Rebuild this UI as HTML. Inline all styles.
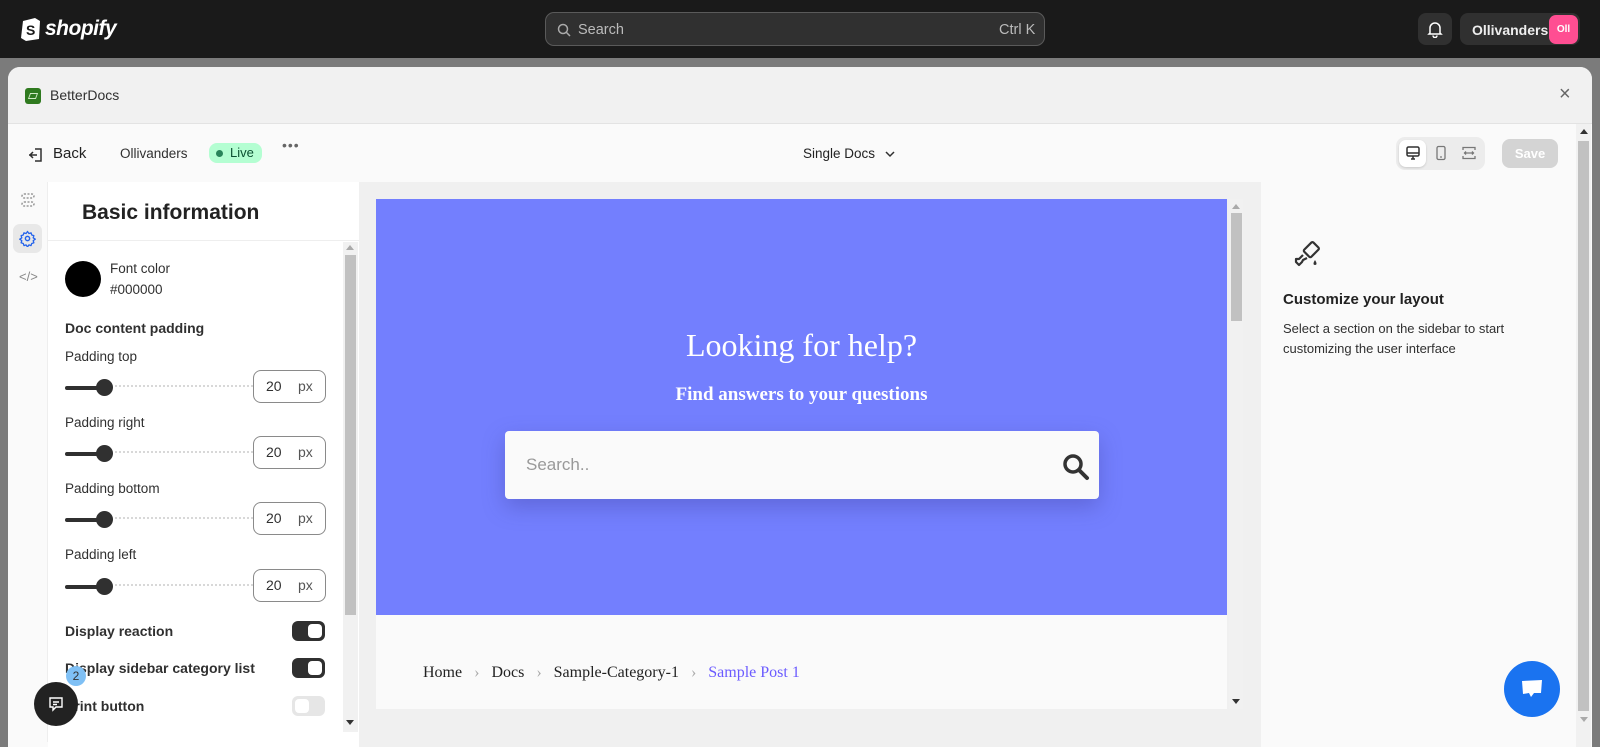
<!DOCTYPE html>
<html><head><meta charset="utf-8"><style>
*{box-sizing:border-box;margin:0;padding:0}
body{width:1600px;height:732px;overflow:hidden;background:#7b7b7b;font-family:"Liberation Sans",sans-serif;position:relative;color:#303030}
.a{position:absolute}
.top{left:0;top:0;width:1600px;height:58px;background:#1a1a1a}
.modal{left:8px;top:67px;width:1584px;height:680px;background:#fafafa;border-radius:12px 12px 0 0;overflow:hidden}
.lbl{font-size:13.5px;color:#303030}
.slider{height:4px;background:#303030;border-radius:2px}
.track{height:4px;border-top:2px dotted #d8d8d8}
.knob{width:17px;height:17px;border-radius:50%;background:#303030}
.inp{width:73px;height:33px;border:1px solid #8a8a8a;border-radius:8px;font-size:14px;line-height:31px}
.tog{width:33px;height:20px;border-radius:6px;background:#303030}
.tog i{position:absolute;right:3px;top:3px;width:14px;height:14px;border-radius:4px;background:#fff}
.b{font-weight:bold;font-size:14px;color:#303030}
</style></head><body>
<div class="a top"></div>
<svg class="a" style="left:20px;top:15px" width="22" height="26" viewBox="0 0 22 26"><path d="M3 6 L15 3 L20 6 L19 24 L6 26 L1 23 Z" fill="#fff"/><text x="6" y="20" font-size="14" font-weight="bold" fill="#1a1a1a" font-family="Liberation Sans">S</text></svg>
<div class="a" style="left:45px;top:17px;color:#fff;font-size:21px;font-weight:bold;font-style:italic;letter-spacing:-0.5px">shopify</div>
<div class="a" style="left:545px;top:12px;width:500px;height:34px;background:#303030;border:1px solid #5a5a5a;border-radius:9px"></div>
<svg class="a" style="left:557px;top:23px" width="14" height="14" viewBox="0 0 14 14"><circle cx="6" cy="6" r="4.5" stroke="#aaa" stroke-width="1.5" fill="none"/><path d="M9.5 9.5 L13 13" stroke="#aaa" stroke-width="1.5"/></svg>
<div class="a" style="left:578px;top:22px;color:#bbb;font-size:14.5px">Search</div>
<div class="a" style="left:999px;top:22px;color:#bbb;font-size:14.5px">Ctrl K</div>
<div class="a" style="left:1418px;top:13px;width:34px;height:32px;background:#303030;border-radius:8px"></div>
<svg class="a" style="left:1426px;top:20px" width="18" height="18" viewBox="0 0 18 18"><path d="M4 13 V8 a5 5 0 0 1 10 0 V13 L15 14 H3 Z M7 15.5 a2 2 0 0 0 4 0" stroke="#fff" stroke-width="1.5" fill="none"/></svg>
<div class="a" style="left:1460px;top:13px;width:120px;height:32px;background:#303030;border-radius:8px"></div>
<div class="a" style="left:1472px;top:22px;color:#eee;font-size:14px;font-weight:bold">Ollivanders</div>
<div class="a" style="left:1549px;top:15px;width:29px;height:29px;background:#ff4e92;border-radius:7px;color:#fff;font-size:10px;font-weight:bold;text-align:center;line-height:29px">Oll</div>

<div class="a modal">
 <div class="a" style="left:0;top:0;width:1584px;height:57px;background:#f1f1f1;border-bottom:1px solid #e3e3e3"></div>
 <div class="a" style="left:17px;top:21px;width:16px;height:16px;background:#2f7a1f;border-radius:3px"></div>
 <div class="a" style="left:21px;top:26px;width:8px;height:6px;border:1.5px solid #cfe8c4;transform:skewX(-20deg)"></div>
 <div class="a" style="left:42px;top:20px;font-size:14px;color:#303030">BetterDocs</div>
 <div class="a" style="left:1551px;top:16px;font-size:20px;color:#666">×</div>
 <svg class="a" style="left:20px;top:80px" width="16" height="16" viewBox="0 0 16 16"><path d="M7 2 H13 V14 H7 M1 8 H9 M5 5 L2 8 L5 11" stroke="#303030" stroke-width="1.5" fill="none"/></svg>
 <div class="a" style="left:45px;top:78px;font-size:15px;color:#222">Back</div>
 <div class="a" style="left:112px;top:79px;font-size:13.5px;color:#303030">Ollivanders</div>
 <div class="a" style="left:201px;top:76px;width:53px;height:20px;background:#b4fed2;border-radius:8px;font-size:13px;line-height:20px;color:#0c5132;padding-left:21px">Live</div>
 <div class="a" style="left:208px;top:83px;width:7px;height:7px;border-radius:50%;background:#29845a"></div>
 <div class="a" style="left:274px;top:70px;font-size:14px;color:#666;letter-spacing:1px">•••</div>
 <div class="a" style="left:795px;top:79px;font-size:13.5px;color:#222">Single Docs</div>
 <svg class="a" style="left:876px;top:82px" width="12" height="10" viewBox="0 0 12 10"><path d="M2 3 L6 7 L10 3" stroke="#303030" stroke-width="1.5" fill="none"/></svg>
 <div class="a" style="left:1388px;top:70px;width:89px;height:33px;background:#ececec;border-radius:9px"></div>
 <div class="a" style="left:1391px;top:73px;width:27px;height:27px;background:#fff;border-radius:7px;box-shadow:0 1px 2px rgba(0,0,0,.15)"></div>
 <svg class="a" style="left:1397px;top:78px" width="16" height="16" viewBox="0 0 16 16"><rect x="2" y="2" width="12" height="9" rx="1.5" stroke="#303030" stroke-width="1.5" fill="none"/><path d="M2 8 H14 M6 14 H10 M8 11 V14" stroke="#303030" stroke-width="1.5"/></svg>
 <svg class="a" style="left:1425px;top:78px" width="16" height="16" viewBox="0 0 16 16"><rect x="4" y="1.5" width="8" height="13" rx="1.5" stroke="#777" stroke-width="1.3" fill="none"/><path d="M7 12 H9" stroke="#777" stroke-width="1.2"/></svg>
 <svg class="a" style="left:1453px;top:78px" width="16" height="16" viewBox="0 0 16 16"><path d="M2 5 V2.5 H14 V5 M2 11 V13.5 H14 V11 M4 8 H12 M5 6.5 L3.5 8 L5 9.5 M11 6.5 L12.5 8 L11 9.5" stroke="#777" stroke-width="1.3" fill="none"/></svg>
 <div class="a" style="left:1494px;top:72px;width:56px;height:29px;background:#d4d4d4;border-radius:8px;color:#fff;font-size:13px;font-weight:bold;text-align:center;line-height:29px">Save</div>
 <div class="a" style="left:1568px;top:57px;width:15px;height:623px;background:#f1f1f1"></div>
 <div class="a" style="left:1570px;top:74px;width:11px;height:570px;background:#c1c1c1"></div>
 <div class="a" style="left:1572px;top:62px;border:4px solid transparent;border-bottom:5px solid #333;border-top:0"></div>
 <div class="a" style="left:1572px;top:650px;border:4px solid transparent;border-top:5px solid #aaa;border-bottom:0"></div>

 <div class="a" style="left:0;top:115px;width:40px;height:560px;border-right:1px solid #eee"></div>
 <svg class="a" style="left:12px;top:125px" width="16" height="16" viewBox="0 0 16 16"><rect x="2" y="2" width="12" height="4" rx="2" stroke="#888" stroke-width="1.3" fill="none" stroke-dasharray="2 1.5"/><rect x="2" y="10" width="12" height="4" rx="2" stroke="#888" stroke-width="1.3" fill="none" stroke-dasharray="2 1.5"/></svg>
 <div class="a" style="left:5px;top:157px;width:29px;height:29px;background:#e8e8e8;border-radius:7px"></div>
 <svg class="a" style="left:11px;top:163px" width="17" height="17" viewBox="0 0 24 24"><circle cx="12" cy="12" r="3" stroke="#2463eb" stroke-width="2" fill="none"/><path d="M12 2 l2 3 3-1 1 3 3 1-1 3 3 2-3 2 1 3-3 1-1 3-3-1-2 3-2-3-3 1-1-3-3-1 1-3-3-2 3-2-1-3 3-1 1-3 3 1z" stroke="#2463eb" stroke-width="1.8" fill="none" stroke-linejoin="round"/></svg>
 <div class="a" style="left:11px;top:202px;font-size:13px;color:#888">&lt;/&gt;</div>

 <div class="a" style="left:40px;top:115px;width:311px;height:565px;background:#fff"></div>
 <div class="a" style="left:74px;top:134px;font-size:21px;font-weight:bold;color:#222">Basic information</div>
 <div class="a" style="left:40px;top:173px;width:311px;border-top:1px solid #eee"></div>
 <div class="a" style="left:335px;top:175px;width:15px;height:490px;background:#f1f1f1"></div>
 <div class="a" style="left:337px;top:188px;width:11px;height:360px;background:#c1c1c1"></div>
 <div class="a" style="left:338px;top:178px;border:4px solid transparent;border-bottom:5px solid #aaa;border-top:0"></div>
 <div class="a" style="left:338px;top:653px;border:4px solid transparent;border-top:5px solid #333;border-bottom:0"></div>
 <div class="a" style="left:57px;top:194px;width:36px;height:36px;border-radius:50%;background:#000"></div>
 <div class="a lbl" style="left:102px;top:194px">Font color</div>
 <div class="a lbl" style="left:102px;top:215px">#000000</div>
 <div class="a b" style="left:57px;top:253px">Doc content padding</div>

 <div class="a lbl" style="left:57px;top:282px">Padding top</div>
 <div class="a slider" style="left:57px;top:319px;width:40px"></div><div class="a track" style="left:100px;top:318px;width:145px"></div><div class="a knob" style="left:88px;top:312px"></div>
 <div class="a inp" style="left:245px;top:303px"><span style="position:absolute;left:12px">20</span><span style="position:absolute;left:44px;color:#555">px</span></div>

 <div class="a lbl" style="left:57px;top:348px">Padding right</div>
 <div class="a slider" style="left:57px;top:385px;width:40px"></div><div class="a track" style="left:100px;top:384px;width:145px"></div><div class="a knob" style="left:88px;top:378px"></div>
 <div class="a inp" style="left:245px;top:369px"><span style="position:absolute;left:12px">20</span><span style="position:absolute;left:44px;color:#555">px</span></div>

 <div class="a lbl" style="left:57px;top:414px">Padding bottom</div>
 <div class="a slider" style="left:57px;top:451px;width:40px"></div><div class="a track" style="left:100px;top:450px;width:145px"></div><div class="a knob" style="left:88px;top:444px"></div>
 <div class="a inp" style="left:245px;top:435px"><span style="position:absolute;left:12px">20</span><span style="position:absolute;left:44px;color:#555">px</span></div>

 <div class="a lbl" style="left:57px;top:480px">Padding left</div>
 <div class="a slider" style="left:57px;top:518px;width:40px"></div><div class="a track" style="left:100px;top:517px;width:145px"></div><div class="a knob" style="left:88px;top:511px"></div>
 <div class="a inp" style="left:245px;top:502px"><span style="position:absolute;left:12px">20</span><span style="position:absolute;left:44px;color:#555">px</span></div>

 <div class="a b" style="left:57px;top:556px">Display reaction</div>
 <div class="a tog" style="left:284px;top:554px"><i></i></div>
 <div class="a b" style="left:57px;top:593px">Display sidebar category list</div>
 <div class="a tog" style="left:284px;top:591px"><i></i></div>
 <div class="a b" style="left:57px;top:631px">Print button</div>
 <div class="a tog" style="left:284px;top:629px;background:#e6e6e6"><i style="left:3px;right:auto"></i></div>

 <div class="a" style="left:351px;top:115px;width:902px;height:565px;background:#f0f0f0"></div>
 <div class="a" style="left:368px;top:132px;width:851px;height:510px;background:#fafafa"></div>
 <div class="a" style="left:368px;top:132px;width:851px;height:416px;background:#737ffe"></div>
 <div class="a" style="left:368px;top:260px;width:851px;text-align:center;font-family:'Liberation Serif',serif;font-size:32px;color:#fff">Looking for help?</div>
 <div class="a" style="left:368px;top:317px;width:851px;text-align:center;font-family:'Liberation Serif',serif;font-size:19px;font-weight:bold;color:#fff">Find answers to your questions</div>
 <div class="a" style="left:497px;top:364px;width:594px;height:68px;background:#fafafa;border-radius:4px;box-shadow:0 8px 22px rgba(60,60,150,.35)"></div>
 <div class="a" style="left:518px;top:388px;font-size:17px;color:#999">Search..</div>
 <svg class="a" style="left:1054px;top:386px" width="28" height="28" viewBox="0 0 28 28"><circle cx="11" cy="11" r="8" stroke="#333" stroke-width="3.5" fill="none"/><path d="M17 17 L25 25" stroke="#333" stroke-width="4" stroke-linecap="round"/></svg>
 <div class="a" style="left:415px;top:597px;font-family:'Liberation Serif',serif;font-size:16px;color:#222;white-space:nowrap">Home <span style="color:#aaa;margin:0 8px">›</span> Docs <span style="color:#aaa;margin:0 8px">›</span> Sample-Category-1 <span style="color:#aaa;margin:0 8px">›</span> <span style="color:#6b5bff">Sample Post 1</span></div>
 <div class="a" style="left:1221px;top:132px;width:14px;height:510px;background:#f1f1f1"></div>
 <div class="a" style="left:1223px;top:146px;width:11px;height:108px;background:#c1c1c1"></div>
 <div class="a" style="left:1224px;top:137px;border:4px solid transparent;border-bottom:5px solid #aaa;border-top:0"></div>
 <div class="a" style="left:1224px;top:632px;border:4px solid transparent;border-top:5px solid #333;border-bottom:0"></div>

 <svg class="a" style="left:1285px;top:173px" width="30" height="30" viewBox="0 0 30 30"><g stroke="#333" stroke-width="2.2" fill="none" stroke-linejoin="round"><rect x="13" y="3" width="10" height="13" rx="1.5" transform="rotate(45 18 10)"/><path d="M10 15 L6 19 L3 19 L3 22 L6 25 L9 22 L10 20 L14 18"/></g><path d="M22 20 C20 23 20 25 22 25 C24 25 24 23 22 20Z" fill="#333"/></svg>
 <div class="a" style="left:1275px;top:224px;font-size:15px;font-weight:bold;color:#222">Customize your layout</div>
 <div class="a" style="left:1275px;top:252px;font-size:13px;color:#303030;line-height:20px">Select a section on the sidebar to start<br>customizing the user interface</div>
 <div class="a" style="left:1496px;top:594px;width:56px;height:56px;border-radius:50%;background:#1a73f0"></div>
 <svg class="a" style="left:1510px;top:608px" width="28" height="28" viewBox="0 0 28 28"><path d="M4 6 L24 5 L23 18 L16 18 L13 22 L11 18 L5 19 Z" fill="#fff"/></svg>
</div>
<div class="a" style="left:34px;top:682px;width:44px;height:44px;border-radius:50%;background:#222"></div>
<svg class="a" style="left:47px;top:695px" width="18" height="18" viewBox="0 0 18 18"><path d="M3 3 H15 V12 H9 L6 15 V12 H3 Z M6 7 H12 M6 9.5 H10" stroke="#fff" stroke-width="1.4" fill="none"/></svg>
<div class="a" style="left:66px;top:666px;width:20px;height:20px;border-radius:50%;background:#7fc0f5;color:#333;font-size:12px;text-align:center;line-height:20px">2</div>
</body></html>
